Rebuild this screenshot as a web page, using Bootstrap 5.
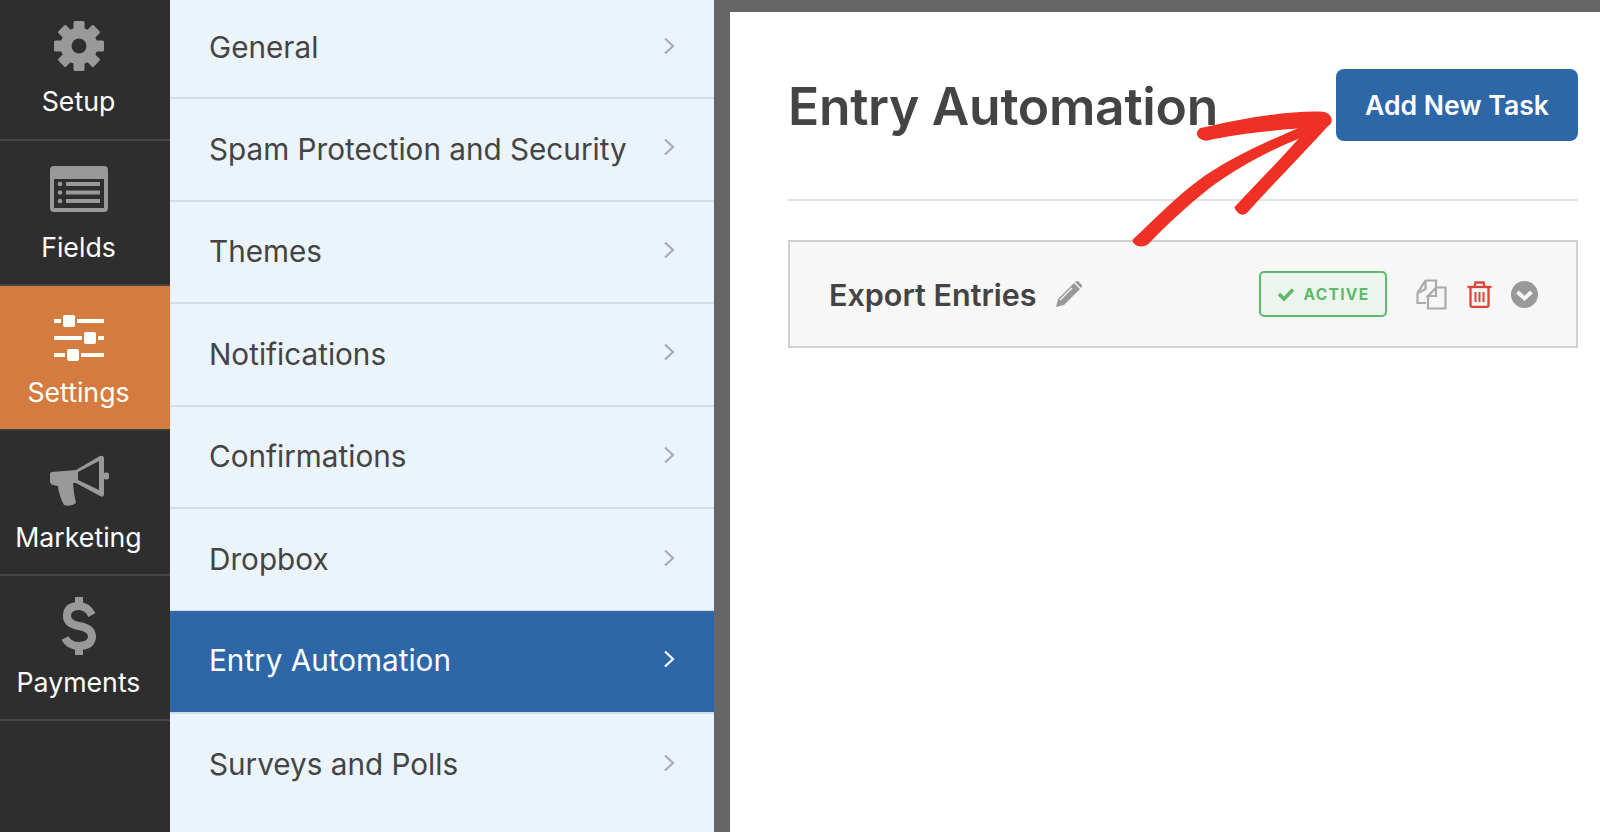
<!DOCTYPE html>
<html lang="en">
<head>
    <meta charset="UTF-8">
    <meta name="viewport" content="width=device-width, initial-scale=1.0">
    <title>Entry Automation</title>
    <link href="https://cdn.jsdelivr.net/npm/bootstrap@5.3.0/dist/css/bootstrap.min.css" rel="stylesheet">
    <script src="https://cdn.jsdelivr.net/npm/bootstrap@5.3.0/dist/js/bootstrap.bundle.min.js"></script>
    <style>
        html, body { height: 100%; overflow: hidden; }
        body { font-family: Inter, "Liberation Sans", sans-serif; background: #666; color: #444; }
        .builder { height: 832px; }

        .side-panel { width: 170px; background: #2e2e2e; }
        .side-item { height: 145px; padding: 21px 13px 0 0; border-bottom: 2px solid #454545; color: #fff; font-size: 26.7px; line-height: 34px; }
        .side-item:first-child { height: 141px; padding-top: 16px; }
        .side-item.is-on { background: #d47c40; border-bottom-color: #3c3c3c; }
        .side-icon { height: 60px; margin-bottom: 8px; }

        .menu-panel { width: 544px; background: #ebf3fb; }
        .menu-panel .list-group-item { height: 102.6px; padding: 0 39px 1px 39px; background: #ebf3fb; border: 0; border-bottom: 2px solid #d3dde7; border-radius: 0; color: #444; font-size: 29.7px; }
        .menu-panel .list-group-item:first-child { height: 99px; padding-bottom: 3px; }
        .menu-panel .list-group-item.active { background: #2d67a8; color: #fff; border-bottom-color: #d3dde7; }
        .menu-panel svg { margin-bottom: 3px; }

        .work-area { flex: 1; margin: 12px 0 0 16px; background: #fff; padding: 0 22px 0 58px; }
        .head-row { height: 189px; padding-bottom: 1px; border-bottom: 2px solid #e2e2e2; }
        .head-row h1 { margin: 4px 0 0; font-size: 51.6px; font-weight: 600; color: #444; letter-spacing: -0.3px; }
        .add-btn.btn { width: 242px; height: 72px; padding-top: 8px; background: #2d67a8; border: 0; border-radius: 8px; font-size: 26.6px; font-weight: 600; }
        .task-row { height: 108px; margin-top: 39px; padding: 0 38px 0 39px; background: #f7f7f7; border: 2px solid #d0d0d0; }
        .task-row h2 { margin: 2px 0 0; font-size: 30.5px; font-weight: 600; color: #444; }
        .edit-icon { margin-left: 18px; }
        .state-tag { width: 128px; height: 46px; margin-right: 29px; background: #ebf5ee; border: 2px solid #5fb96c; border-radius: 5px; color: #5fb96c; font-size: 15.5px; font-weight: 700; letter-spacing: 1.3px; }
        .state-tag span { padding: 2px 0 0 1px; }
        .trash-icon { margin: 0 19px 0 20px; }

        .hand-arrow { position: absolute; left: 1100px; top: 50px; }
    </style>
</head>
<body>
    <div class="builder d-flex position-relative">
        <div class="side-panel flex-shrink-0">
            <div class="side-item d-flex flex-column align-items-center">
                <div class="side-icon">
                    <svg width="60" height="60" viewBox="0 0 60 60" fill="#999">
                        <rect x="24.500" y="5" width="11" height="50" rx="1.5"/>
                        <rect x="24.500" y="5" width="11" height="50" rx="1.5" transform="rotate(45 30 30)"/>
                        <rect x="24.500" y="5" width="11" height="50" rx="1.5" transform="rotate(90 30 30)"/>
                        <rect x="24.500" y="5" width="11" height="50" rx="1.5" transform="rotate(135 30 30)"/>
                        <circle cx="30" cy="30" r="18.500"/>
                        <circle cx="30" cy="30" r="7.500" fill="#2e2e2e"/>
                    </svg>
                </div>
                <span>Setup</span>
            </div>
            <div class="side-item d-flex flex-column align-items-center">
                <div class="side-icon">
                    <svg width="60" height="60" viewBox="0 0 60 60">
                        <rect x="1" y="4" width="58" height="46" rx="4" fill="#999"/>
                        <rect x="5" y="17" width="50" height="29" fill="#2e2e2e"/>
                        <g fill="#999">
                            <circle cx="11" cy="22" r="2.3"/><circle cx="11" cy="30.500" r="2.3"/><circle cx="11" cy="39" r="2.3"/>
                            <rect x="17" y="20" width="34" height="4"/><rect x="17" y="28.500" width="34" height="4"/><rect x="17" y="37" width="34" height="4"/>
                        </g>
                    </svg>
                </div>
                <span>Fields</span>
            </div>
            <div class="side-item is-on d-flex flex-column align-items-center">
                <div class="side-icon">
                    <svg width="60" height="60" viewBox="0 0 60 60" fill="#fff">
                        <rect x="5" y="12" width="7" height="4"/><rect x="28" y="12" width="27" height="4"/>
                        <rect x="5" y="29" width="28" height="4"/><rect x="49" y="29" width="6" height="4"/>
                        <rect x="5" y="46" width="11" height="4"/><rect x="32" y="46" width="23" height="4"/>
                        <rect x="14" y="8" width="12" height="12" rx="2"/>
                        <rect x="35" y="25" width="12" height="12" rx="2"/>
                        <rect x="18" y="42" width="12" height="12" rx="2"/>
                    </svg>
                </div>
                <span>Settings</span>
            </div>
            <div class="side-item d-flex flex-column align-items-center">
                <div class="side-icon">
                    <svg width="60" height="60" viewBox="0 0 60 60" fill="#999">
                        <path d="M1 22 Q1 20 3 20 L27 18 L51 4 Q55 3 55 7 L55 42 Q55 46 51 44 L27 31 L24 31 L25 41 L27 51 Q22 55 15 53 Q10 44 9 34 L4 33 Q1 32 1 29Z"/>
                        <path d="M29 20 L50 9 L50 38 L29 28Z" fill="#2e2e2e"/>
                        <circle cx="57" cy="24" r="3.500"/>
                    </svg>
                </div>
                <span>Marketing</span>
            </div>
            <div class="side-item d-flex flex-column align-items-center">
                <div class="side-icon">
                    <svg width="60" height="60" viewBox="0 0 60 60" fill="#999">
                        <path d="M43 18 Q38 9 30 9 Q18 9 18 19 Q18 27 30 29 Q43 31 43 40 Q42 49 30 49 Q20 49 16 41" fill="none" stroke="#999" stroke-width="8"/>
                        <rect x="26" y="0" width="8" height="10"/>
                        <rect x="26" y="48" width="8" height="10"/>
                    </svg>
                </div>
                <span>Payments</span>
            </div>
        </div>

        <div class="menu-panel flex-shrink-0">
            <div class="list-group list-group-flush">
                <a class="list-group-item d-flex justify-content-between align-items-center" href="#">General
                    <svg width="12" height="18" viewBox="0 0 12 18"><path d="M2 1.500 L10 9 L2 16.500" fill="none" stroke="#aab" stroke-width="2.200"/></svg></a>
                <a class="list-group-item d-flex justify-content-between align-items-center" href="#">Spam Protection and Security
                    <svg width="12" height="18" viewBox="0 0 12 18"><path d="M2 1.500 L10 9 L2 16.500" fill="none" stroke="#aab" stroke-width="2.200"/></svg></a>
                <a class="list-group-item d-flex justify-content-between align-items-center" href="#">Themes
                    <svg width="12" height="18" viewBox="0 0 12 18"><path d="M2 1.500 L10 9 L2 16.500" fill="none" stroke="#aab" stroke-width="2.200"/></svg></a>
                <a class="list-group-item d-flex justify-content-between align-items-center" href="#">Notifications
                    <svg width="12" height="18" viewBox="0 0 12 18"><path d="M2 1.500 L10 9 L2 16.500" fill="none" stroke="#aab" stroke-width="2.200"/></svg></a>
                <a class="list-group-item d-flex justify-content-between align-items-center" href="#">Confirmations
                    <svg width="12" height="18" viewBox="0 0 12 18"><path d="M2 1.500 L10 9 L2 16.500" fill="none" stroke="#aab" stroke-width="2.200"/></svg></a>
                <a class="list-group-item d-flex justify-content-between align-items-center" href="#">Dropbox
                    <svg width="12" height="18" viewBox="0 0 12 18"><path d="M2 1.500 L10 9 L2 16.500" fill="none" stroke="#aab" stroke-width="2.200"/></svg></a>
                <a class="list-group-item active d-flex justify-content-between align-items-center" href="#">Entry Automation
                    <svg width="12" height="18" viewBox="0 0 12 18"><path d="M2 1.500 L10 9 L2 16.500" fill="none" stroke="#fff" stroke-width="2.200"/></svg></a>
                <a class="list-group-item d-flex justify-content-between align-items-center" href="#">Surveys and Polls
                    <svg width="12" height="18" viewBox="0 0 12 18"><path d="M2 1.500 L10 9 L2 16.500" fill="none" stroke="#aab" stroke-width="2.200"/></svg></a>
            </div>
        </div>

        <div class="work-area">
            <div class="head-row d-flex justify-content-between align-items-center">
                <h1>Entry Automation</h1>
                <button class="btn btn-primary add-btn" type="button">Add New Task</button>
            </div>
            <div class="task-row d-flex align-items-center">
                <h2>Export Entries</h2>
                <svg class="edit-icon" width="28" height="28" viewBox="0 0 28 28" fill="#999">
                    <path d="M1 27 L3 19 L19 3 L25 9 L9 25Z"/>
                    <path d="M20.500 1.500 Q22 0.500 23.500 1.500 L26.500 4.500 Q27.500 6 26.500 7.500 L26 8 L20 2Z"/>
                    <path d="M5 20 L17 8" stroke="#f7f7f7" stroke-width="1.200"/>
                </svg>
                <div class="state-tag d-flex align-items-center justify-content-center gap-2 ms-auto">
                    <svg width="18" height="14" viewBox="0 0 18 14"><path d="M2 7 L7 12 L16 2.500" fill="none" stroke="#5fb96c" stroke-width="3.600"/></svg>
                    <span>ACTIVE</span>
                </div>
                <svg width="31" height="31" viewBox="0 0 31 31" fill="none" stroke="#aaa" stroke-width="2.200">
                    <path d="M10 24 L1.500 24 L1.500 14 L9.500 1.500 L20 1.500 L20 8"/>
                    <path d="M9.500 1.500 L9.500 10 L2 14"/>
                    <path d="M12 17 L12 29.500 L29.500 29.500 L29.500 8.500 L20 8.500 L12 17 L20 17 L20 8.500"/>
                </svg>
                <svg class="trash-icon" width="25" height="27" viewBox="0 0 25 27" fill="none" stroke="#dc4435" stroke-width="2.300">
                    <path d="M0.500 6 L24.500 6"/>
                    <path d="M7.500 5.500 L8.500 1.500 L16.500 1.500 L17.500 5.500"/>
                    <path d="M3.500 6 L3.500 24 Q3.500 26 5.500 26 L19.500 26 Q21.500 26 21.500 24 L21.500 6"/>
                    <path d="M8.500 11 L8.500 21 M12.500 11 L12.500 21 M16.500 11 L16.500 21" stroke-width="2"/>
                </svg>
                <svg width="27" height="27" viewBox="0 0 27 27">
                    <circle cx="13.500" cy="13.500" r="13.500" fill="#999"/>
                    <path d="M6.500 11 L13.500 17.500 L20.500 11" fill="none" stroke="#f7f7f7" stroke-width="3.800"/>
                </svg>
            </div>
        </div>

        <svg class="hand-arrow" width="500" height="210" viewBox="0 0 1500 630" fill="#ee3124">
            <path d="M300 235 C400 210 560 180 670 185 C700 190 705 225 675 232 C560 235 420 250 320 272 C295 272 280 250 300 235Z"/>
            <path d="M97 570 C170 500 235 435 290 395 C385 325 500 275 600 232 L650 225 L625 254 C520 295 415 350 328 415 C265 465 200 525 145 582 C130 595 100 590 97 570Z"/>
            <path d="M403 472 C470 400 560 310 640 215 L695 215 C620 300 530 390 440 490 C425 500 410 490 403 472Z"/>
        </svg>
    </div>
</body>
</html>
